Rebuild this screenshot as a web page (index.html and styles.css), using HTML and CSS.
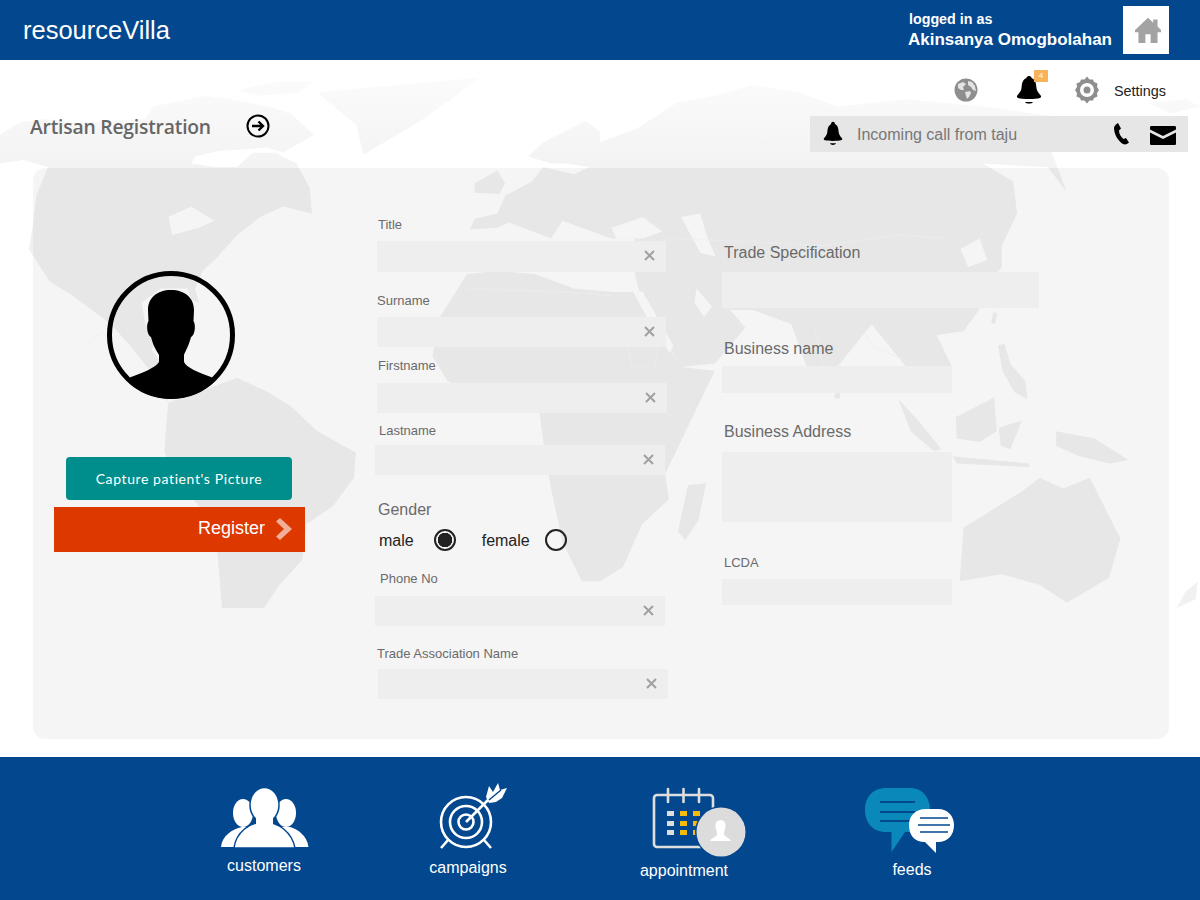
FILE: index.html
```html
<!DOCTYPE html>
<html lang="en">
<head>
  <meta charset="UTF-8" />
  <title>Artisan Registration - resourceVilla</title>
  <link rel="stylesheet" href="styles.css">
</head>
<body>
  <header class="header">
    <div class="brand">resourceVilla</div>
    <div class="user">
      <div class="user-hint">logged in as</div>
      <div class="user-name">Akinsanya Omogbolahan</div>
    </div>
    <a class="home" href="#">
      <svg width="26" height="26" viewBox="0 0 30 30"><path class="grey" d="M15 1 L21 6.500 V3 H26 V11 L30 15 V17.500 H26 V30 H18 V20 H12 V30 H4 V17.500 H0 V15 Z"/></svg>
    </a>
  </header>

  <main class="main">
    <svg class="map" viewBox="0 0 3136 1952" preserveAspectRatio="none" aria-hidden="true">
      <g class="land">
        <!-- americas -->
        <path d="M0 210 L50 175 120 165 200 175 290 170 380 165 400 130 470 115 540 100 600 110 700 130 760 150 820 210 770 240 740 260 700 245 640 250 570 255 510 270 500 290 560 300 620 300 660 260 720 260 775 290 810 360 815 430 740 410 680 440 620 490 570 550 530 590 510 640 520 680 500 670 490 640 420 640 370 680 380 740 410 790 395 810 430 860 440 960 400 880 340 800 290 740 240 700 190 660 130 620 75 530 85 470 95 380 125 300 60 280 0 290 Z"/>
        <path d="M440 960 L520 930 620 890 700 930 760 970 830 1040 930 1100 925 1170 870 1250 800 1300 790 1400 730 1470 690 1535 580 1535 570 1400 560 1300 480 1200 430 1100 435 1010 Z"/>
        <path d="M830 90 L1250 50 1180 110 1150 130 1100 170 950 265 930 180 850 110 Z"/>
        <!-- africa -->
        <path d="M1220 600 L1300 590 1400 600 1500 640 1600 650 1668 650 1778 860 1868 870 1738 1160 1748 1230 1678 1300 1628 1420 1568 1460 1520 1460 1470 1350 1440 1200 1420 1070 1410 990 1300 960 1170 900 1130 830 1150 720 Z"/>
        <!-- eurasia -->
        <path d="M1228 475 L1240 445 1300 430 1320 380 1390 340 1420 300 1500 320 1540 300 1480 290 1440 290 1380 270 1420 230 1530 170 1568 200 1568 230 1668 190 1768 120 1868 100 1968 70 2088 90 2188 130 2368 110 2568 130 2768 160 2748 258 2788 370 2738 300 2568 290 2648 340 2658 430 2618 520 2618 580 2568 640 2558 700 2518 760 2448 770 2488 860 2368 860 2278 740 2188 860 2108 860 2068 740 1968 700 1908 700 1948 750 1868 850 1778 860 1668 640 1658 590 1658 500 1598 500 1520 470 1470 450 1440 500 1330 455 1300 470 Z"/>
        <!-- islands -->
        <path d="M1240 345 L1300 310 1320 345 1305 375 1240 372 Z"/>
        <path d="M1798 1190 L1845 1185 1825 1290 1790 1345 1772 1320 Z"/>
        <path d="M2498 1000 L2598 945 2605 1040 2560 1070 2500 1060 Z"/>
        <path d="M2348 950 L2400 1010 2460 1090 2440 1095 2380 1040 Z"/>
        <path d="M2490 1110 L2690 1130 2690 1140 2500 1130 Z"/>
        <path d="M2610 1030 L2670 1010 2660 1040 2640 1090 2615 1080 Z"/>
        <path d="M2608 800 L2625 795 2640 850 2680 900 2685 950 2650 930 2620 870 Z"/>
        <path d="M2760 1040 L2860 1060 2950 1120 2900 1130 2820 1110 2760 1080 Z"/>
        <path d="M2518 1310 L2668 1210 2718 1170 2778 1200 2848 1170 2928 1340 2898 1450 2788 1520 2718 1470 2618 1440 2508 1460 Z"/>
        <path d="M2596 705 L2606 710 2600 740 2590 735 Z"/>
        <path d="M2180 935 L2196 932 2194 948 2182 948 Z"/>
        <path d="M3098 1490 L3130 1460 3125 1510 3075 1535 Z"/>
        <!-- arctic -->
        <path d="M480 130 L560 115 600 135 530 150 Z"/>
        <path d="M620 85 L720 60 820 60 780 90 680 100 Z"/>
        <path d="M3000 120 L3100 110 3136 130 3060 150 Z"/>
      </g>
      <g class="sea">
        <!-- seas and lakes cut out of the land -->
        <path d="M1598 470 L1680 440 1730 480 1680 500 1610 500 Z"/>
        <path d="M1780 440 L1830 430 1850 500 1870 550 1830 540 1800 480 Z"/>
        <path d="M1820 640 L1860 690 1840 720 1815 680 Z"/>
        <path d="M1650 640 L1680 650 1760 800 1750 820 1690 720 Z"/>
        <path d="M440 440 L500 410 560 450 520 470 450 490 Z"/>
        <path d="M2510 530 L2560 500 2580 560 2530 580 Z"/>
      </g>
      <g class="border">
        <path d="M1220 640 L1480 650 1600 660"/>
        <path d="M1640 780 L1650 860 1710 860 1720 800"/>
        <path d="M1740 500 L1990 510 2150 520 2350 490 2480 500"/>
        <path d="M2128 740 L2150 860"/>
        <path d="M2240 730 L2280 800 2400 860"/>
        <path d="M230 790 L270 760 300 820"/>
      </g>
    </svg>

    <section class="top">
      <div class="page-title">
        <h1>Artisan Registration</h1>
        <svg class="go" width="24" height="24" viewBox="0 0 24 24"><circle cx="12" cy="12" r="10.500" fill="none" stroke="#000" stroke-width="2"/><path d="M6 12 H16 M12.500 7.500 L17 12 L12.500 16.500" fill="none" stroke="#000" stroke-width="2.400"/></svg>
      </div>
      <div class="top-right">
        <div class="tools">
          <svg class="tool-globe" width="24" height="24" viewBox="0 0 24 24"><circle class="mid" cx="12" cy="12" r="11.500"/><path fill="#fff" d="M4 6 L9 4 12 6 9 9 10 12 7 12 4 10 Z M11 14 L16 13 17 15 15 19 13 21 12 18 Z M14 3 L18 4 21 8 22 13 19 12 17 9 14 7 Z" opacity=".75"/></svg>
          <div class="tool-bell">
            <svg width="26" height="34" viewBox="0 0 26 34"><path d="M13 3 C15 3 15.500 4 15.500 5 C20 7 20 11 20.500 15 C21 19 24 21 25 23 C25.500 25 24 26 13 26 C2 26 .500 25 1 23 C2 21 5 19 5.500 15 C6 11 6 7 10.500 5 C10.500 4 11 3 13 3 Z M9 29 H17 C16 31 10 31 9 29 Z"/></svg>
            <span class="badge">4</span>
          </div>
          <svg class="tool-gear" width="26" height="28" viewBox="0 0 26 28"><path class="mid" fill-rule="evenodd" d="M13 .500 L15.500 3.500 19 3.500 20 6 23.500 7.500 23 11 25 14 23 17 23.500 20.500 20 22 19 24.500 15.500 24.500 13 27.500 10.500 24.500 7 24.500 6 22 2.500 20.500 3 17 1 14 3 11 2.500 7.500 6 6 7 3.500 10.500 3.500 Z M13 7 A7 7 0 1 0 13 21 A7 7 0 1 0 13 7 Z"/><circle class="mid" cx="13" cy="14" r="3.500"/></svg>
          <span class="settings">Settings</span>
        </div>
        <div class="call">
          <svg width="20" height="26" viewBox="0 0 26 34"><path d="M13 1 C15 1 15.500 3 15.500 4 C20 6 20 11 20.500 15 C21 19 24 21 25 23 C25.500 25 24 26 13 26 C2 26 .500 25 1 23 C2 21 5 19 5.500 15 C6 11 6 7 10.500 4 C10.500 3 11 1 13 1 Z M9 29 H17 C16 32 10 32 9 29 Z"/></svg>
          <span class="call-text">Incoming call from taju</span>
          <svg class="call-phone" width="16" height="22" viewBox="0 0 16 22"><path d="M5 0 L8 5.500 6 7.500 C6 11 8 14 10.500 16 L13 15 L16 19.500 C14 21.500 12 22 10 21 C5 18 1 11 1 5 C1 3 3 1 5 0 Z"/></svg>
          <svg class="call-mail" width="26" height="19" viewBox="0 0 26 19"><path d="M1.500 0 H24.500 C25.500 0 26 .500 26 1.500 V3.500 L13 10 L0 3.500 V1.500 C0 .500 .500 0 1.500 0 Z M0 6.500 L13 13 L26 6.500 V17.500 C26 18.500 25.500 19 24.500 19 H1.500 C.500 19 0 18.500 0 17.500 Z"/></svg>
        </div>
      </div>
    </section>

    <form class="card" onsubmit="return false">
      <div class="col-photo">
        <svg class="avatar" width="128" height="128" viewBox="107 271 128 128">
          <circle cx="171" cy="335" r="61.500" fill="none" stroke="#000" stroke-width="5"/>
          <path d="M171 290 C185 290 194 298 194 310 L193.500 321 C196 325 195 335 191 337 C189 345 186 350 184 355 L184 362 C187 368 198 372 211 377 L216 380 A63.600 63.600 0 0 1 126 380 L131 377 C144 372 155 368 159 362 L159 355 C156 350 153 345 151 337 C147 335 146 325 148.500 321 L148 310 C148 298 157 290 171 290 Z"/>
        </svg>
        <button class="btn-capture" type="button">Capture patient's Picture</button>
        <button class="btn-register" type="submit">
          <span>Register</span>
          <svg width="16" height="22" viewBox="0 0 16 22"><path d="M0 3.500 L4 0 L16 11 L4 22 L0 18.500 L8 11 Z" fill="#fff" fill-opacity=".6"/></svg>
        </button>
      </div>

      <div class="col-main">
        <div class="field f-title">
          <label for="title">Title</label>
          <div class="input"><input id="title" type="text"><svg class="clear" width="11" height="11" viewBox="0 0 11 11"><path d="M1 1 L10 10 M10 1 L1 10"/></svg></div>
        </div>
        <div class="field f-surname">
          <label for="surname">Surname</label>
          <div class="input"><input id="surname" type="text"><svg class="clear" width="11" height="11" viewBox="0 0 11 11"><path d="M1 1 L10 10 M10 1 L1 10"/></svg></div>
        </div>
        <div class="field f-firstname">
          <label for="firstname">Firstname</label>
          <div class="input"><input id="firstname" type="text"><svg class="clear" width="11" height="11" viewBox="0 0 11 11"><path d="M1 1 L10 10 M10 1 L1 10"/></svg></div>
        </div>
        <div class="field f-lastname">
          <label for="lastname">Lastname</label>
          <div class="input"><input id="lastname" type="text"><svg class="clear" width="11" height="11" viewBox="0 0 11 11"><path d="M1 1 L10 10 M10 1 L1 10"/></svg></div>
        </div>
        <div class="gender">
          <div class="gender-label">Gender</div>
          <div class="gender-row">
            <span class="gender-text">male</span><span class="radio radio-on"></span>
            <span class="gender-text female">female</span><span class="radio"></span>
          </div>
        </div>
        <div class="field f-phone">
          <label for="phone">Phone No</label>
          <div class="input"><input id="phone" type="text"><svg class="clear" width="11" height="11" viewBox="0 0 11 11"><path d="M1 1 L10 10 M10 1 L1 10"/></svg></div>
        </div>
        <div class="field f-trade">
          <label for="association">Trade Association Name</label>
          <div class="input"><input id="association" type="text"><svg class="clear" width="11" height="11" viewBox="0 0 11 11"><path d="M1 1 L10 10 M10 1 L1 10"/></svg></div>
        </div>
      </div>

      <div class="col-side">
        <div class="side-field s-spec">
          <label for="spec">Trade Specification</label>
          <input id="spec" type="text">
        </div>
        <div class="side-field s-name">
          <label for="bname">Business name</label>
          <input id="bname" type="text">
        </div>
        <div class="side-field s-address">
          <label for="address">Business Address</label>
          <textarea id="address"></textarea>
        </div>
        <div class="side-field s-lcda">
          <label for="lcda">LCDA</label>
          <input id="lcda" type="text">
        </div>
      </div>
    </form>
  </main>

  <footer class="footer">
    <a class="nav nav-customers" href="#">
      <svg width="90" height="62" viewBox="219 786 90 62">
        <ellipse class="w" cx="243" cy="813" rx="10" ry="14"/>
        <ellipse class="w" cx="286" cy="813" rx="10" ry="14"/>
        <path class="w" d="M221 847 C222 836 232 829 242 827 L290 827 C298 829 307 836 308.500 847 Z"/>
        <path class="w gap" d="M234 848 C236 832 250 822 264 822 C278 822 292 832 295 848 Z"/>
        <ellipse class="w gap" cx="264.500" cy="805" rx="14.500" ry="17.500"/>
        <path class="w" d="M256 818 H273 V826 H256 Z"/>
      </svg>
      <span>customers</span>
    </a>
    <a class="nav nav-campaigns" href="#">
      <svg width="70" height="68" viewBox="439 782 70 68">
        <g class="line" stroke-width="2.600">
          <circle cx="467" cy="822" r="25"/>
          <circle cx="467" cy="822" r="16"/>
          <circle cx="467" cy="822" r="7.500"/>
          <path d="M467 822 L490 799 M442 848 L449 840 M492 848 L485 840"/>
        </g>
        <path class="w" d="M487 797 L490 786 494 792 499 783 501 790 508 788 503 798 497 802 490 803 Z"/>
        <path d="M490 800 L502 790" stroke="#03478e" stroke-width="1.500"/>
      </svg>
      <span>campaigns</span>
    </a>
    <a class="nav nav-appointment" href="#">
      <svg width="94" height="72" viewBox="652 787 94 72">
        <rect x="654" y="795" width="59" height="52" rx="3" fill="none" stroke="#dedede" stroke-width="2.600"/>
        <path d="M668 789 V802 M683.500 789 V802 M699 789 V802" stroke="#dedede" stroke-width="2.600" stroke-linecap="round"/>
        <g fill="#dedede">
          <rect x="667" y="811" width="7" height="5"/><rect x="667" y="821" width="7" height="5"/><rect x="667" y="830" width="7" height="5"/>
        </g>
        <g fill="#f6bb0c">
          <rect x="680" y="811" width="7" height="5"/><rect x="680" y="821" width="7" height="5"/><rect x="680" y="830" width="7" height="5"/><rect x="693" y="811" width="7" height="5"/><rect x="693" y="821" width="7" height="5"/><rect x="693" y="830" width="7" height="5"/>
        </g>
        <circle cx="721" cy="832" r="26" fill="#03478e"/>
        <circle cx="721" cy="832" r="24.500" fill="#dcdcdc"/>
        <path fill="#fff" d="M720.500 820 C724 820 726 823 725.500 827 C725 830 724 831 724 834 C724.500 837 730 838 731 841 L710 841 C711 838 717 837 717 834 C717 831 716 830 715.500 827 C715 823 717 820 720.500 820 Z"/>
      </svg>
      <span>appointment</span>
    </a>
    <a class="nav nav-feeds" href="#">
      <svg width="92" height="66" viewBox="864 787 92 66">
        <path fill="#0a88b9" d="M886 788 H910 C922 788 930 797 930 810 C930 823 922 832 910 832 H905 L891.500 852 V832 H886 C873 832 865 823 865 810 C865 797 873 788 886 788 Z"/>
        <path d="M880 802 H915 M880 812 H915 M880 821 H915" stroke="#03478e" stroke-width="2"/>
        <path fill="#fff" d="M926 809 H938 C948 809 954 816 954 825 C954 835 948 842 938 842 H936 V853 L925 842 C914 842 909 835 909 825 C909 816 915 809 926 809 Z"/>
        <path d="M920 818 H948 M918 825 H950 M920 832 H948" stroke="#03478e" stroke-width="1.600"/>
      </svg>
      <span>feeds</span>
    </a>
  </footer>
</body>
</html>
```

FILE: styles.css
```css
* {
  box-sizing: border-box;
}

body {
  margin: 0;
  padding: 0;
  background-color: #fff;
  font-family: "Liberation Sans", Arial, sans-serif;
}

.grey {
  fill: #a3a3a3;
}

.mid {
  fill: #8e8e8e;
}

/* header */
.header {
  height: 60px;
  display: flex;
  align-items: center;
  padding: 0 31px 0 23px;
  background-color: #03478e;
  color: #fff;
}

.brand {
  font-size: 25.500px;
  flex: 1;
}

.user {
  padding-top: 2px;
  font-weight: bold;
  margin-right: 11px;
}

.user-hint {
  font-size: 14.300px;
  line-height: 18px;
  margin-left: 1px;
}

.user-name {
  font-size: 17px;
  line-height: 24px;
}

.home {
  width: 46px;
  height: 48px;
  padding-left: 4px;
  background-color: #fff;
  display: flex;
  align-items: center;
  justify-content: center;
}

/* main area with the map behind it */
.main {
  position: relative;
  height: 697px;
  overflow: hidden;
}

.map {
  position: absolute;
  top: 0;
  left: 0;
  width: 1200px;
  height: 697px;
}

.land path {
  fill: #f1f1f1;
}

.sea path {
  fill: #fff;
}

.border path {
  fill: none;
  stroke: #f7f7f7;
  stroke-width: 2;
}

.top {
  position: relative;
  height: 108px;
  display: flex;
  justify-content: space-between;
  /* the map fades out towards the header */
  background: linear-gradient(rgba(255, 255, 255, .85), rgba(255, 255, 255, .15));
}

.page-title {
  display: flex;
  align-items: center;
  height: 30px;
  margin: 51px 0 0 30px;
}

.page-title h1 {
  margin: 0;
  font-family: "Open Sans", sans-serif;
  font-size: 19.300px;
  font-weight: 600;
  color: #666;
  letter-spacing: -.2px;
}

.go {
  margin-left: 35px;
}

.top-right {
  width: 378px;
  margin-right: 12px;
}

.tools {
  height: 56px;
  display: flex;
  align-items: center;
  padding: 3px 0 0 143px;
}

.tool-globe {
  margin-left: 1px;
}

.tool-bell {
  position: relative;
  margin-left: 38px;
  height: 34px;
}

.badge {
  position: absolute;
  top: -3px;
  left: 18px;
  width: 14px;
  height: 12px;
  background-color: #f9b25c;
  color: #fff;
  font-size: 8px;
  line-height: 12px;
  text-align: center;
}

.tool-gear {
  margin-left: 32px;
}

.settings {
  margin: 3px 0 0 14px;
  font-size: 14.400px;
  color: #222;
}

.call {
  height: 36px;
  display: flex;
  align-items: center;
  padding: 0 12px 0 13px;
  background-color: #e6e6e6;
}

.call-text {
  flex: 1;
  margin: 2px 0 0 14px;
  font-size: 16px;
  color: #777;
}

.call-phone {
  margin-right: 21px;
}

.call-mail {
  margin-top: 3px;
}

/* form card */
.card {
  position: relative;
  height: 571px;
  margin: 0 31px 0 33px;
  display: flex;
  border-radius: 12px;
  background-color: rgba(0, 0, 0, .04);
}

label {
  display: block;
}

input,
textarea {
  display: block;
  border: none;
  outline: none;
  resize: none;
  background-color: #eee;
}

.col-photo {
  width: 342px;
}

.avatar {
  display: block;
  margin: 103px 0 58px 74px;
}

.btn-capture {
  display: block;
  width: 226px;
  height: 43px;
  margin-left: 33px;
  border: none;
  border-radius: 4px;
  background-color: #008e8c;
  color: #fff;
  font-family: Lato, sans-serif;
  font-size: 14px;
  letter-spacing: .6px;
}

.btn-register {
  display: flex;
  align-items: center;
  justify-content: flex-end;
  width: 251px;
  height: 45px;
  margin: 7px 0 0 21px;
  padding: 0 13px 2px 0;
  border: none;
  background-color: #dc3800;
  color: #fff;
  font-family: "Liberation Sans", Arial, sans-serif;
  font-size: 18px;
}

.btn-register span {
  margin-right: 11px;
}

.col-main {
  width: 347px;
  padding-top: 49px;
}

.field label {
  font-size: 13px;
  line-height: 16px;
  color: #6a6a6a;
}

.input {
  position: relative;
  width: 290px;
  height: 30px;
  display: flex;
  align-items: center;
  background-color: #eee;
}

.input input {
  flex: 1;
  min-width: 0;
  height: 100%;
  background: none;
}

.clear {
  margin: 0 11px 2px 0;
  fill: none;
  stroke: #a0a0a0;
  stroke-width: 2;
}

.f-title label {
  padding-left: 3px;
  margin-bottom: 8px;
}

.f-title .input {
  width: 289px;
  height: 31px;
  margin-left: 2px;
}

.f-surname {
  margin-top: 21px;
}

.f-surname label {
  padding-left: 2px;
  margin-bottom: 8px;
}

.f-surname .input {
  width: 289px;
  margin-left: 2px;
}

.f-firstname {
  margin-top: 11px;
}

.f-firstname label {
  padding-left: 3px;
  margin-bottom: 9px;
}

.f-firstname .input {
  margin-left: 2px;
}

.f-lastname {
  margin-top: 10px;
}

.f-lastname label {
  padding-left: 4px;
  margin-bottom: 6px;
}

.gender {
  margin: 25px 0 0 3px;
}

.gender-label {
  font-size: 16px;
  line-height: 20px;
  color: #6a6a6a;
}

.gender-row {
  display: flex;
  align-items: center;
  height: 24px;
  margin-top: 8px;
  padding-left: 1px;
  font-size: 16px;
  color: #222;
}

.gender-text {
  padding-top: 2px;
}

.radio {
  width: 22px;
  height: 22px;
  margin-left: 20px;
  border: 2px solid #222;
  border-radius: 50%;
}

.radio-on {
  background: radial-gradient(circle, #222 0, #222 7px, transparent 7.500px);
}

.female {
  margin-left: 26px;
  margin-right: -5px;
}

.f-phone {
  margin-top: 19px;
}

.f-phone label {
  padding-left: 5px;
  margin-bottom: 9px;
}

.f-trade {
  margin-top: 20px;
}

.f-trade label {
  padding-left: 2px;
  margin-bottom: 7px;
}

.f-trade .input {
  margin-left: 3px;
}

.col-side {
  flex: 1;
  padding-top: 76px;
}

.side-field label {
  padding-left: 2px;
  font-size: 16px;
  line-height: 18px;
  color: #6a6a6a;
}

.side-field input,
.side-field textarea {
  width: 230px;
}

.s-spec label {
  margin-bottom: 10px;
}

.s-spec input {
  width: 317px;
  height: 36px;
}

.s-name {
  margin-top: 32px;
}

.s-name label {
  margin-bottom: 8px;
}

.s-name input {
  height: 27px;
}

.s-address {
  margin-top: 30px;
}

.s-address label {
  margin-bottom: 11px;
}

.s-address textarea {
  height: 70px;
}

.s-lcda {
  margin-top: 33px;
}

.s-lcda label {
  font-size: 13px;
  line-height: 16px;
  margin-bottom: 8px;
}

.s-lcda input {
  height: 26px;
}

/* bottom navigation */
.footer {
  height: 143px;
  display: flex;
  padding-left: 184px;
  background-color: #03478e;
}

.nav {
  width: 160px;
  display: flex;
  flex-direction: column;
  align-items: center;
  color: #fff;
  font-size: 16px;
  line-height: 20px;
  text-decoration: none;
}

.nav svg {
  display: block;
}

.w {
  fill: #fff;
}

.gap {
  stroke: #03478e;
  stroke-width: 1.500;
}

.line {
  fill: none;
  stroke: #fff;
}

.nav-customers {
  padding-top: 29px;
}

.nav-customers span {
  margin-top: 8px;
}

.nav-campaigns {
  margin-left: 44px;
  padding-top: 25px;
}

.nav-campaigns svg {
  margin-left: 10px;
}

.nav-campaigns span {
  margin-top: 8px;
}

.nav-appointment {
  margin-left: 56px;
  padding-top: 30px;
}

.nav-appointment svg {
  margin-left: 30px;
}

.nav-appointment span {
  margin-top: 2px;
}

.nav-feeds {
  margin-left: 68px;
  padding-top: 30px;
}

.nav-feeds svg {
  margin-left: -4px;
}

.nav-feeds span {
  margin-top: 7px;
}
```
